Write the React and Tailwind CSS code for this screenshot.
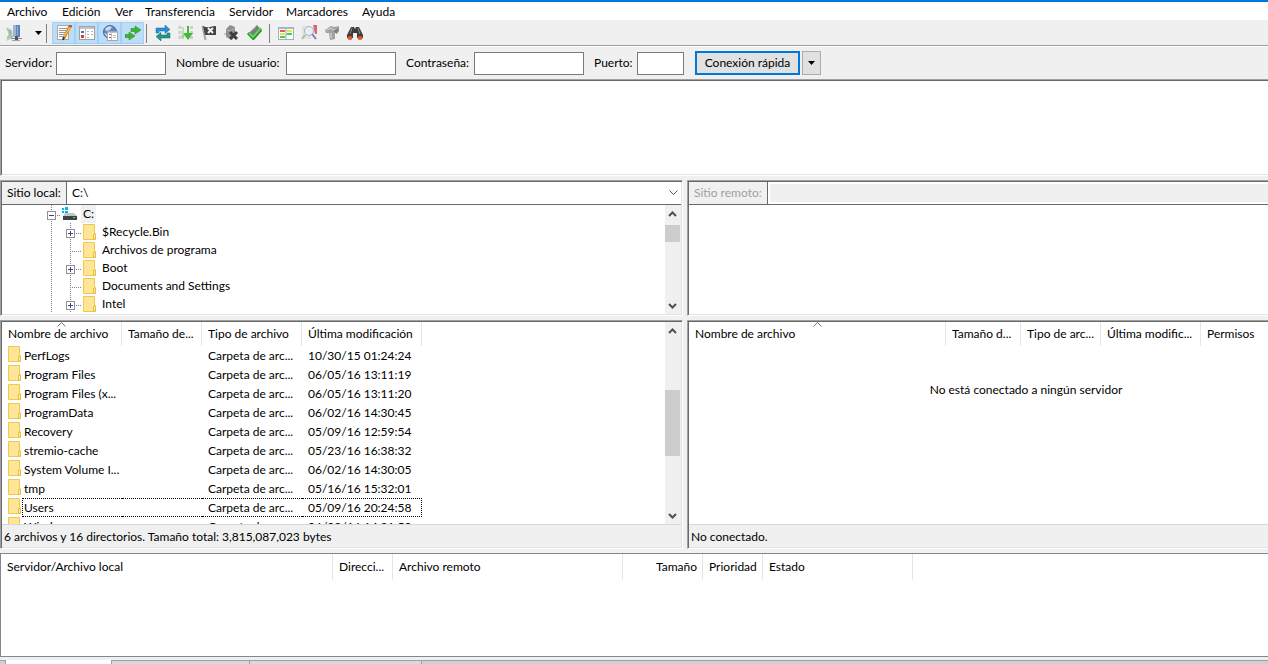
const menu = ["Archivo", "Edición", "Ver", "Transferencia", "Servidor", "Marcadores", "Ayuda"];

const folders = [
  { name: "$Recycle.Bin", closed: true },
  { name: "Archivos de programa" },
  { name: "Boot", closed: true },
  { name: "Documents and Settings" },
  { name: "Intel", closed: true },
];

const files = [
  { name: "PerfLogs", date: "10/30/15 01:24:24" },
  { name: "Program Files", date: "06/05/16 13:11:19" },
  { name: "Program Files (x...", date: "06/05/16 13:11:20" },
  { name: "ProgramData", date: "06/02/16 14:30:45" },
  { name: "Recovery", date: "05/09/16 12:59:54" },
  { name: "stremio-cache", date: "05/23/16 16:38:32" },
  { name: "System Volume I...", date: "06/02/16 14:30:05" },
  { name: "tmp", date: "05/16/16 15:32:01" },
  { name: "Users", date: "05/09/16 20:24:58", focused: true },
  { name: "Windows", date: "06/02/16 14:31:50" },
];

/* Bordes hundidos de los paneles */
const sunken =
  "border border-t-[#a0a0a0] border-l-[#a0a0a0] border-r-white border-b-white bg-white p-px shadow-[inset_1px_1px_0_#696969,inset_-1px_-1px_0_#e3e3e3]";
const sunkenOpen =
  "border-y border-l border-t-[#a0a0a0] border-l-[#a0a0a0] border-b-white bg-white py-px pl-px shadow-[inset_1px_1px_0_#696969,inset_0_-1px_0_#e3e3e3]";

function Icon({ children }) {
  return (
    <svg width="16" height="16" viewBox="0 0 16 16" fill="none" aria-hidden="true">
      {children}
    </svg>
  );
}

function SiteManagerIcon() {
  return (
    <Icon>
      <path d="M0 2l6 3 1 8-7 3 3-6z" fill="#b5d0b0" />
      <path d="M1 4l4 4-4 5M5 5l-2 4 3 3" stroke="#93b393" />
      <rect x="7" y="0" width="3" height="12" fill="#9bb5da" />
      <rect x="10" y="0" width="4" height="12" fill="#5d83ba" />
      <rect x="11" y="1" width="1" height="10" fill="#8fafdb" />
      <path d="M5 13.500h11" stroke="#7b8ba0" strokeWidth="1" />
      <path d="M6 15.500h8" stroke="#a0a0a0" />
      <path d="M10.500 11v4" stroke="#555" strokeWidth="3" />
    </Icon>
  );
}

function LogIcon() {
  return (
    <Icon>
      <rect x="1.500" y="0.500" width="11" height="14" fill="#fdfdfd" stroke="#a9a9a9" />
      <path d="M3 3.500h8M3 5.500h7M3 7.500h6M3 9.500h5M3 11.500h4" stroke="#9a9a9a" />
      <path d="M14 1L8 13" stroke="#d98a1a" strokeWidth="3" />
      <path d="M14 2L8 12" stroke="#ffd34d" />
      <path d="M15 0l-1 2" stroke="#b0503c" strokeWidth="3" />
      <path d="M8 12l-1 3" stroke="#333" strokeWidth="2" />
    </Icon>
  );
}

function LocalTreeIcon() {
  return (
    <Icon>
      <rect x="0.500" y="1.500" width="15" height="13" fill="#fff" stroke="#a2a2a2" />
      <path d="M1 3h14" stroke="#c2c2c2" strokeWidth="2" />
      <path d="M6.500 4v10" stroke="#c5c5c5" />
      <rect x="2" y="6" width="3" height="2" fill="#3f74c8" />
      <rect x="2" y="10" width="3" height="3" fill="#d04030" />
      <path d="M8 6.500h2M12 6.500h2M8 9.500h2M12 9.500h2M8 12.500h2" stroke="#b4b4b4" />
    </Icon>
  );
}

function RemoteTreeIcon() {
  return (
    <Icon>
      <circle cx="8" cy="7" r="6.500" fill="#5b89cc" stroke="#41699f" />
      <path d="M3 4q3-4 7-2l-2 3-4 1zM2 8l3 1v3z" fill="#c6dbf2" />
      <rect x="5.500" y="6.500" width="10" height="9" fill="#fff" stroke="#a8a8a8" />
      <path d="M6 7.500h9M9.500 8v7" stroke="#c5c5c5" />
      <rect x="7" y="9" width="2" height="1" fill="#3f74c8" />
      <rect x="7" y="12" width="2" height="1" fill="#d04030" />
      <path d="M11 10.500h3M11 12.500h3" stroke="#bbb" />
    </Icon>
  );
}

function QueueIcon() {
  return (
    <Icon>
      <path d="M6 3.500h4V1l6 4-6 4V6.500H6z" fill="#3ab52f" stroke="#23851f" strokeWidth="0.500" />
      <path d="M0 9.500h4V7l6 4-6 4v-2.500H0z" fill="#3ab52f" stroke="#23851f" strokeWidth="0.500" />
    </Icon>
  );
}

function RefreshIcon() {
  return (
    <Icon>
      <path d="M1 8V3h9V0l5 4.500-5 4V6H4v2z" fill="#2b8fd8" stroke="#1565a8" strokeWidth="0.500" />
      <path d="M15 8v5H6v3l-5-4.500 5-4V10h6V8z" fill="#21958a" stroke="#13695f" strokeWidth="0.500" />
    </Icon>
  );
}

function ProcessQueueIcon() {
  return (
    <Icon>
      <path d="M2 1v14M13.500 1v14" stroke="#cdcdcd" strokeWidth="3" strokeDasharray="3 2" />
      <path d="M5 2v12" stroke="#bfe0bc" strokeWidth="2" />
      <path d="M3 10l2 4 2-4z" fill="#9ccf9a" />
      <path d="M9 1h2v7h4l-5 7-5-7h4z" fill="#43b93c" />
    </Icon>
  );
}

function FlagIcon() {
  return (
    <Icon>
      <path d="M1.500 1l3 14" stroke="#a5a5a5" strokeWidth="2" />
      <path d="M2 1q4 2 7 1t6-1v9q-3 0-5 0t-6 0z" fill="#444" />
      <path d="M7 3l5 5M12 3L7 8" stroke="#f4f4f4" strokeWidth="2" />
    </Icon>
  );
}

function DisconnectIcon() {
  return (
    <Icon>
      <path d="M2 4l4-4 5 2v9l-3 4-6-3z" fill="#8f8f8f" />
      <path d="M2 5l4 1 5-3" stroke="#b3b3b3" />
      <path d="M0 9h3" stroke="#999" />
      <path d="M6 7l7 7M13 7l-7 7" stroke="#3d3d3d" strokeWidth="3" />
    </Icon>
  );
}

function ReconnectIcon() {
  return (
    <Icon>
      <path d="M1 9l9-9 5 6-8 9z" fill="#7d7d7d" />
      <path d="M3 7l6-5" stroke="#aaa" />
      <path d="M1 8l5 5 8-9" stroke="#1f8b1f" strokeWidth="3" />
      <path d="M2 8l4 4 8-9" stroke="#5bdc50" strokeWidth="2" />
    </Icon>
  );
}

function FilterIcon() {
  return (
    <Icon>
      <rect x="0.500" y="2.500" width="15" height="12" fill="#fff" stroke="#9db3c2" />
      <path d="M1 3.500h14" stroke="#9cc0d6" />
      <path d="M2 6h5" stroke="#ff4c4c" strokeWidth="2" />
      <path d="M2 9h5M9 6h5" stroke="#f3e23c" strokeWidth="2" />
      <path d="M2 12h5M9 9h5" stroke="#45d345" strokeWidth="2" />
      <path d="M8 4v10" stroke="#7da4b8" />
    </Icon>
  );
}

function CompareIcon() {
  return (
    <Icon>
      <rect x="1" y="1" width="9" height="13" fill="#e2e2e2" />
      <path d="M12 0h4v9h-2z" fill="#d9676f" />
      <circle cx="8" cy="6" r="4.500" fill="#e6eef8" stroke="#a9b3c4" />
      <path d="M4 10l-3 4" stroke="#b5b5b5" strokeWidth="2" />
      <path d="M11 9l4 5" stroke="#6b86b0" strokeWidth="2" />
    </Icon>
  );
}

function SyncBrowseIcon() {
  return (
    <Icon>
      <path d="M1 5l6-4 3 1 5-1v6l-4 1v6l-5 1-1-7H2z" fill="#a3a3a3" />
      <path d="M3 5l4-2 2 2h5M7 8v5" stroke="#d8d8d8" />
      <path d="M9 6l6-3-2 6z" fill="#7f7f7f" />
    </Icon>
  );
}

function FindIcon() {
  return (
    <Icon>
      <path d="M4 2h3l1 2 1-2h3l4 8v3h-6V8H6v5H0v-3z" fill="#3c3c3c" />
      <path d="M5 3L3 9M11 3l2 6" stroke="#888" />
      <ellipse cx="3" cy="13" rx="2.500" ry="2" fill="#e8552a" />
      <ellipse cx="13" cy="13" rx="2.500" ry="2" fill="#e8552a" />
    </Icon>
  );
}

function FolderIcon() {
  return (
    <svg width="14" height="16" viewBox="0 0 14 16" className="shrink-0" aria-hidden="true">
      <path d="M0.500 0.500h11v9h1v6h-12z" fill="#ffe596" stroke="#efc94f" />
      <path d="M10.500 15V10.500h2V15z" fill="#fff0b8" stroke="#e8bf3f" />
    </svg>
  );
}

function DriveIcon() {
  return (
    <svg width="16" height="14" viewBox="0 0 16 14" className="shrink-0" aria-hidden="true">
      <path d="M1 1h2v2H1zM4 0h3v3H4zM1 4h2v2H1zM4 4h3v3H4z" fill="#00b4f0" />
      <path d="M4 6h9l3 3H2z" fill="#c3c5c7" />
      <rect x="2" y="9" width="14" height="4" fill="#404346" />
      <rect x="12" y="10" width="2" height="1" fill="#4be04b" />
    </svg>
  );
}

/* Líneas de puntos y casilla de expandir de cada nodo */
function TreeGuide({ root, box }) {
  const x = root ? 49 : 68;
  return (
    <svg
      width={root ? 59 : 81}
      height="18"
      className="shrink-0"
      shapeRendering="crispEdges"
      aria-hidden="true"
    >
      <g stroke="#808080" strokeDasharray="1 1">
        <path d="M49.500 0v18" />
        {!root && <path d="M68.500 0v18" />}
        <path d={root ? "M49 10.500h10" : "M68 10.500h11"} />
      </g>
      {box && (
        <g>
          <rect x={x - 4} y="6" width="9" height="9" fill="#919191" />
          <rect x={x - 3} y="7" width="7" height="7" fill="#fff" />
          <rect x={x - 2} y="10" width="5" height="1" fill="#31479c" />
          {!root && <rect x={x} y="8" width="1" height="5" fill="#31479c" />}
        </g>
      )}
    </svg>
  );
}

function Chevron({ up }) {
  return (
    <svg width="9" height="6" viewBox="0 0 9 6" fill="none" aria-hidden="true">
      <path d={up ? "M1 5l3.500-3.500L8 5" : "M1 1l3.500 3.500L8 1"} stroke="#505050" strokeWidth="2" />
    </svg>
  );
}

function ScrollBar({ thumb }) {
  return (
    <div className="flex w-4 shrink-0 flex-col bg-[#f0f0f0]">
      <button className="flex h-[18px] w-[15px] items-center justify-center" aria-label="Subir">
        <Chevron up />
      </button>
      <div className="flex w-full flex-1 flex-col">
        <div className={`w-[15px] bg-[#cdcdcd] ${thumb}`} />
      </div>
      <button className="flex h-[17px] w-[15px] items-center justify-center" aria-label="Bajar">
        <Chevron />
      </button>
    </div>
  );
}

function SortMark() {
  return (
    <svg
      width="9"
      height="5"
      viewBox="0 0 9 5"
      fill="none"
      className="absolute inset-x-0 top-0 mx-auto"
      aria-hidden="true"
    >
      <path d="M0.500 4.500l4-4 4 4" stroke="#777" />
    </svg>
  );
}

function Head({ children, sorted, right }) {
  return (
    <th
      className={`relative overflow-hidden border-r border-[#e5e5e5] p-0 font-normal ${
        right ? "pr-[5px] text-right" : "pl-[6px] text-left"
      }`}
    >
      {sorted && <SortMark />}
      {children}
    </th>
  );
}

function ToolButton({ label, on, children }) {
  return (
    <button
      title={label}
      aria-label={label}
      className={`flex h-[22px] w-[23px] items-center justify-center ${
        on ? "border border-[#99d1ff] bg-[#c0dcf3]" : ""
      }`}
    >
      {children}
    </button>
  );
}

function Separator() {
  return <div className="h-[19px] w-px bg-[#808080]" />;
}

function DownTriangle() {
  return (
    <svg width="7" height="4" viewBox="0 0 7 4" aria-hidden="true">
      <path d="M0 0h7L3.500 4z" fill="#000" />
    </svg>
  );
}

function Field({ id, label, labelWidth, width, type = "text" }) {
  return (
    <div className="flex items-center">
      <label htmlFor={id} className={labelWidth}>
        {label}
      </label>
      <input id={id} type={type} className={`h-[23px] border border-[#7a7a7a] bg-white px-1 ${width}`} />
    </div>
  );
}

export default function App() {
  return (
    <div className="flex h-screen flex-col overflow-hidden border-t-2 border-[#0078d7] bg-[#f0f0f0] font-[Lato,'Open_Sans',sans-serif] text-[12px] leading-[18px] whitespace-nowrap text-black">
      {/* Menú */}
      <nav className="grid h-[18px] shrink-0 grid-cols-[55px_53px_30px_84px_57px_76px_auto] bg-white pl-[7px] leading-5">
        {menu.map((item) => (
          <button key={item} className="text-left">
            {item}
          </button>
        ))}
      </nav>

      {/* Barra de herramientas */}
      <div className="flex h-[27px] shrink-0 items-center border-b border-white pl-[6px] shadow-[inset_0_-1px_0_#a0a0a0]">
        <button aria-label="Gestor de sitios" className="flex items-center">
          <SiteManagerIcon />
        </button>
        <button aria-label="Sitios guardados" className="flex w-6 justify-end pr-1">
          <DownTriangle />
        </button>
        <Separator />
        <div className="flex pr-[2px] pl-[5px]">
          <ToolButton label="Registro de mensajes" on>
            <LogIcon />
          </ToolButton>
          <ToolButton label="Árbol local" on>
            <LocalTreeIcon />
          </ToolButton>
          <ToolButton label="Árbol remoto" on>
            <RemoteTreeIcon />
          </ToolButton>
          <ToolButton label="Cola de transferencia" on>
            <QueueIcon />
          </ToolButton>
        </div>
        <Separator />
        <div className="flex pr-[3px] pl-1">
          <ToolButton label="Actualizar">
            <RefreshIcon />
          </ToolButton>
          <ToolButton label="Procesar cola">
            <ProcessQueueIcon />
          </ToolButton>
          <ToolButton label="Cancelar">
            <FlagIcon />
          </ToolButton>
          <ToolButton label="Desconectar">
            <DisconnectIcon />
          </ToolButton>
          <ToolButton label="Reconectar">
            <ReconnectIcon />
          </ToolButton>
        </div>
        <Separator />
        <div className="flex pl-1">
          <ToolButton label="Filtros">
            <FilterIcon />
          </ToolButton>
          <ToolButton label="Comparar directorios">
            <CompareIcon />
          </ToolButton>
          <ToolButton label="Navegación sincronizada">
            <SyncBrowseIcon />
          </ToolButton>
          <ToolButton label="Buscar">
            <FindIcon />
          </ToolButton>
        </div>
      </div>

      {/* Conexión rápida */}
      <form className="flex h-8 shrink-0 items-center gap-[10px] pl-[5px]">
        <Field id="host" label="Servidor:" labelWidth="w-[51px]" width="w-[110px]" />
        <Field id="user" label="Nombre de usuario:" labelWidth="w-[110px]" width="w-[110px]" />
        <Field id="pass" label="Contraseña:" labelWidth="w-[68px]" width="w-[110px]" type="password" />
        <Field id="port" label="Puerto:" labelWidth="w-[43px]" width="w-[47px]" />
        <div className="flex gap-[2px] pl-px">
          <button type="button" className="h-6 w-[105px] border-2 border-[#0078d7] bg-[#e1e1e1] leading-5">
            Conexión rápida
          </button>
          <button
            type="button"
            aria-label="Historial"
            className="flex h-6 w-[19px] items-center justify-center border border-[#adadad] bg-[#e1e1e1]"
          >
            <DownTriangle />
          </button>
        </div>
      </form>

      {/* Registro */}
      <div className={`h-[97px] shrink-0 ${sunkenOpen}`} />

      {/* Local y remoto */}
      <main className="mt-1 grid shrink-0 grid-cols-[683fr_581fr] gap-x-1 gap-y-1">
        <section className={sunken}>
          <div className="flex h-[23px] border-b border-[#696969]">
            <label htmlFor="local" className="w-[65px] border-r border-[#696969] bg-[#f0f0f0] pl-[5px] leading-[22px]">
              Sitio local:
            </label>
            <div className="relative flex-1">
              <select id="local" className="h-full w-full appearance-none bg-white pl-[5px]">
                <option>C:\</option>
              </select>
              <svg width="9" height="6" fill="none" className="absolute top-2 right-[3px]" aria-hidden="true">
                <path d="M0.500 0.500l4 4 4-4" stroke="#505050" />
              </svg>
            </div>
          </div>
          <div className="flex h-[109px]">
            <ul className="flex-1 overflow-hidden">
              <li className="flex h-[18px] items-center">
                <TreeGuide root box />
                <DriveIcon />
                <span className="ml-1 bg-[#f0f0f0] px-[2px]">C:</span>
              </li>
              {folders.map((f) => (
                <li key={f.name} className="flex h-[18px] items-center">
                  <TreeGuide box={f.closed} />
                  <FolderIcon />
                  <span className="ml-[5px]">{f.name}</span>
                </li>
              ))}
            </ul>
            <ScrollBar thumb="mt-[2px] h-[17px]" />
          </div>
        </section>

        <section className={sunkenOpen}>
          <div className="flex h-[23px] border-b border-[#696969]">
            <label
              htmlFor="remote"
              className="w-[79px] border-r border-[#696969] bg-[#f0f0f0] pl-[5px] leading-[22px] text-[#a0a0a0]"
            >
              Sitio remoto:
            </label>
            <select
              id="remote"
              disabled
              className="flex-1 appearance-none border-y-2 border-l-2 border-white bg-[#f0f0f0]"
            />
          </div>
        </section>

        <section className={sunken}>
          <div className="flex h-[202px]">
            <div className="flex-1 overflow-hidden">
              <table className="w-[420px] table-fixed border-separate border-spacing-0">
                <colgroup>
                  <col className="w-[120px]" />
                  <col className="w-[80px]" />
                  <col className="w-[100px]" />
                  <col className="w-[120px]" />
                </colgroup>
                <thead>
                  <tr className="h-6">
                    <Head sorted>Nombre de archivo</Head>
                    <Head>Tamaño de...</Head>
                    <Head>Tipo de archivo</Head>
                    <Head>Última modificación</Head>
                  </tr>
                </thead>
                <tbody className="leading-[19px]">
                  {files.map((f) => (
                    <tr key={f.name} className="h-[19px]">
                      <td className="p-0">
                        <div className="flex h-[19px] pl-[6px]">
                          <FolderIcon />
                          <span
                            className={`h-[19px] flex-1 ${
                              f.focused ? "border-y border-l border-dotted border-black pl-px leading-[17px]" : "pl-[2px]"
                            }`}
                          >
                            {f.name}
                          </span>
                        </div>
                      </td>
                      <td className={`p-0 ${f.focused ? "border-y border-dotted border-black" : ""}`} />
                      <td
                        className={`p-0 pl-[6px] ${
                          f.focused ? "border-y border-dotted border-black leading-[17px]" : ""
                        }`}
                      >
                        Carpeta de arc...
                      </td>
                      <td
                        className={`p-0 pl-[6px] ${
                          f.focused ? "border-y border-r border-dotted border-black leading-[17px]" : ""
                        }`}
                      >
                        {f.date}
                      </td>
                    </tr>
                  ))}
                </tbody>
              </table>
            </div>
            <ScrollBar thumb="mt-[50px] h-[66px]" />
          </div>
          <div className="h-[23px] border-t border-[#d7d7d7] bg-[#f0f0f0] pl-[2px] leading-[23px]">
            6 archivos y 16 directorios. Tamaño total: 3,815,087,023 bytes
          </div>
        </section>

        <section className={`flex flex-col ${sunkenOpen}`}>
          <div className="flex-1">
            <table className="w-full table-fixed border-separate border-spacing-0">
              <colgroup>
                <col />
                <col className="w-[75px]" />
                <col className="w-[80px]" />
                <col className="w-[100px]" />
                <col className="w-[67px]" />
              </colgroup>
              <thead>
                <tr className="h-6">
                  <Head sorted>Nombre de archivo</Head>
                  <Head>Tamaño d...</Head>
                  <Head>Tipo de arc...</Head>
                  <Head>Última modific...</Head>
                  <th className="p-0 pl-[6px] text-left font-normal">Permisos</th>
                </tr>
              </thead>
            </table>
            <p className="pt-[35px] pl-[95px] text-center">No está conectado a ningún servidor</p>
          </div>
          <div className="h-[23px] border-t border-[#d7d7d7] bg-[#f0f0f0] pl-[2px] leading-[23px]">
            No conectado.
          </div>
        </section>
      </main>

      {/* Cola */}
      <div className="mt-1 flex-1 border-y border-l border-[#828790] bg-white">
        <table className="w-[912px] table-fixed border-separate border-spacing-0">
          <colgroup>
            <col className="w-[332px]" />
            <col className="w-[60px]" />
            <col className="w-[230px]" />
            <col className="w-[80px]" />
            <col className="w-[60px]" />
            <col className="w-[150px]" />
          </colgroup>
          <thead>
            <tr className="h-[26px]">
              <Head>Servidor/Archivo local</Head>
              <Head>Direcci...</Head>
              <Head>Archivo remoto</Head>
              <Head right>Tamaño</Head>
              <Head>Prioridad</Head>
              <Head>Estado</Head>
            </tr>
          </thead>
        </table>
      </div>

      {/* Pestañas */}
      <div className="flex h-[7px] shrink-0 pt-[3px]">
        <div className="w-[5px] border-t border-[#a0a0a0] bg-[#d0d0d0]" />
        <button aria-label="Archivos en cola" className="w-[107px] border-x border-[#a0a0a0] bg-white" />
        <button aria-label="Transferencias fallidas" className="w-[138px] border-t border-r border-[#a0a0a0] bg-[#d9d9d9]" />
        <button aria-label="Transferencias satisfactorias" className="w-[172px] border-t border-r border-[#a0a0a0] bg-[#d9d9d9]" />
        <div className="flex-1 border-t border-[#a0a0a0] bg-[#d0d0d0]" />
      </div>
    </div>
  );
}
